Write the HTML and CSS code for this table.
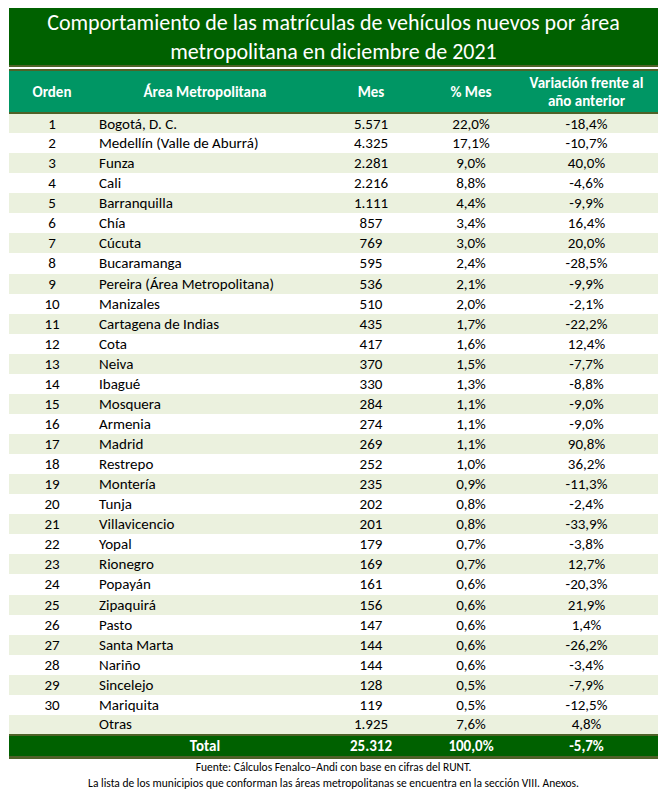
FILE: index.html
```html
<!DOCTYPE html>
<html lang="es">
<head>
<meta charset="utf-8">
<link rel="stylesheet" href="styles.css">
</head>
<body>
<div class="report">
  <div class="title">Comportamiento de las matrículas de vehículos nuevos por área<br>metropolitana en diciembre de 2021</div>
  <table class="grid">
    <colgroup>
      <col class="c-ord"><col class="c-area"><col class="c-mes"><col class="c-pct"><col class="c-var">
    </colgroup>
    <thead>
      <tr><th>Orden</th><th>Área Metropolitana</th><th>Mes</th><th>% Mes</th><th>Variación frente al<br>año anterior</th></tr>
    </thead>
    <tbody>
      <tr><td>1</td><td class="name">Bogotá, D. C.</td><td>5.571</td><td>22,0%</td><td>-18,4%</td></tr>
      <tr><td>2</td><td class="name">Medellín (Valle de Aburrá)</td><td>4.325</td><td>17,1%</td><td>-10,7%</td></tr>
      <tr><td>3</td><td class="name">Funza</td><td>2.281</td><td>9,0%</td><td>40,0%</td></tr>
      <tr><td>4</td><td class="name">Cali</td><td>2.216</td><td>8,8%</td><td>-4,6%</td></tr>
      <tr><td>5</td><td class="name">Barranquilla</td><td>1.111</td><td>4,4%</td><td>-9,9%</td></tr>
      <tr><td>6</td><td class="name">Chía</td><td>857</td><td>3,4%</td><td>16,4%</td></tr>
      <tr><td>7</td><td class="name">Cúcuta</td><td>769</td><td>3,0%</td><td>20,0%</td></tr>
      <tr><td>8</td><td class="name">Bucaramanga</td><td>595</td><td>2,4%</td><td>-28,5%</td></tr>
      <tr><td>9</td><td class="name">Pereira (Área Metropolitana)</td><td>536</td><td>2,1%</td><td>-9,9%</td></tr>
      <tr><td>10</td><td class="name">Manizales</td><td>510</td><td>2,0%</td><td>-2,1%</td></tr>
      <tr><td>11</td><td class="name">Cartagena de Indias</td><td>435</td><td>1,7%</td><td>-22,2%</td></tr>
      <tr><td>12</td><td class="name">Cota</td><td>417</td><td>1,6%</td><td>12,4%</td></tr>
      <tr><td>13</td><td class="name">Neiva</td><td>370</td><td>1,5%</td><td>-7,7%</td></tr>
      <tr><td>14</td><td class="name">Ibagué</td><td>330</td><td>1,3%</td><td>-8,8%</td></tr>
      <tr><td>15</td><td class="name">Mosquera</td><td>284</td><td>1,1%</td><td>-9,0%</td></tr>
      <tr><td>16</td><td class="name">Armenia</td><td>274</td><td>1,1%</td><td>-9,0%</td></tr>
      <tr><td>17</td><td class="name">Madrid</td><td>269</td><td>1,1%</td><td>90,8%</td></tr>
      <tr><td>18</td><td class="name">Restrepo</td><td>252</td><td>1,0%</td><td>36,2%</td></tr>
      <tr><td>19</td><td class="name">Montería</td><td>235</td><td>0,9%</td><td>-11,3%</td></tr>
      <tr><td>20</td><td class="name">Tunja</td><td>202</td><td>0,8%</td><td>-2,4%</td></tr>
      <tr><td>21</td><td class="name">Villavicencio</td><td>201</td><td>0,8%</td><td>-33,9%</td></tr>
      <tr><td>22</td><td class="name">Yopal</td><td>179</td><td>0,7%</td><td>-3,8%</td></tr>
      <tr><td>23</td><td class="name">Rionegro</td><td>169</td><td>0,7%</td><td>12,7%</td></tr>
      <tr><td>24</td><td class="name">Popayán</td><td>161</td><td>0,6%</td><td>-20,3%</td></tr>
      <tr><td>25</td><td class="name">Zipaquirá</td><td>156</td><td>0,6%</td><td>21,9%</td></tr>
      <tr><td>26</td><td class="name">Pasto</td><td>147</td><td>0,6%</td><td>1,4%</td></tr>
      <tr><td>27</td><td class="name">Santa Marta</td><td>144</td><td>0,6%</td><td>-26,2%</td></tr>
      <tr><td>28</td><td class="name">Nariño</td><td>144</td><td>0,6%</td><td>-3,4%</td></tr>
      <tr><td>29</td><td class="name">Sincelejo</td><td>128</td><td>0,5%</td><td>-7,9%</td></tr>
      <tr><td>30</td><td class="name">Mariquita</td><td>119</td><td>0,5%</td><td>-12,5%</td></tr>
      <tr><td></td><td class="name">Otras</td><td>1.925</td><td>7,6%</td><td>4,8%</td></tr>
    </tbody>
    <tfoot>
      <tr><td></td><td>Total</td><td>25.312</td><td>100,0%</td><td>-5,7%</td></tr>
    </tfoot>
  </table>
  <p class="note">Fuente: Cálculos Fenalco–Andi con base en cifras del RUNT.<br>La lista de los municipios que conforman las áreas metropolitanas se encuentra en la sección VIII. Anexos.</p>
</div>
</body>
</html>
```

FILE: styles.css
```css
* { box-sizing: border-box; }
body {
  margin: 0;
  background: #ffffff;
  font-family: Carlito, Calibri, Lato, "Open Sans", sans-serif;
  color: #000000;
}
.report {
  width: 649px;
  margin: 8px 0 0 9px;
}
.title {
  background: #006100;
  color: #ffffff;
  font-size: 22px;
  line-height: 29px;
  text-align: center;
  height: 59px;
  padding-top: 0;
  border-bottom: 2px solid #4f6228;
}
.grid {
  width: 649px;
  border-collapse: collapse;
  table-layout: fixed;
  margin-top: 2px;
}
.c-ord { width: 86px; }
.c-area { width: 220px; }
.c-mes { width: 112px; }
.c-pct { width: 88px; }
.c-var { width: 143px; }
.grid th {
  background: #009664;
  color: #ffffff;
  font-weight: bold;
  font-size: 15px;
  line-height: 18px;
  height: 43px;
  padding: 0;
  text-align: center;
  border-top: 2px solid #4f6228;
  border-bottom: 2px solid #4f6228;
}
.grid td {
  font-size: 15px;
  height: 20.07px;
  line-height: 18px;
  padding: 0;
  text-align: center;
}
.grid tbody tr:nth-child(odd) td { background: #ebf1de; }
.grid td.name { text-align: left; padding-left: 4px; }
.grid tfoot td {
  background: #006100;
  color: #ffffff;
  font-weight: bold;
  height: 23px;
  border-top: 2px solid #4f6228;
  border-bottom: 3px solid #4f6228;
}
.note {
  margin: 0;
  font-size: 11.5px;
  line-height: 16px;
  text-align: center;
  color: #000000;
}
```
